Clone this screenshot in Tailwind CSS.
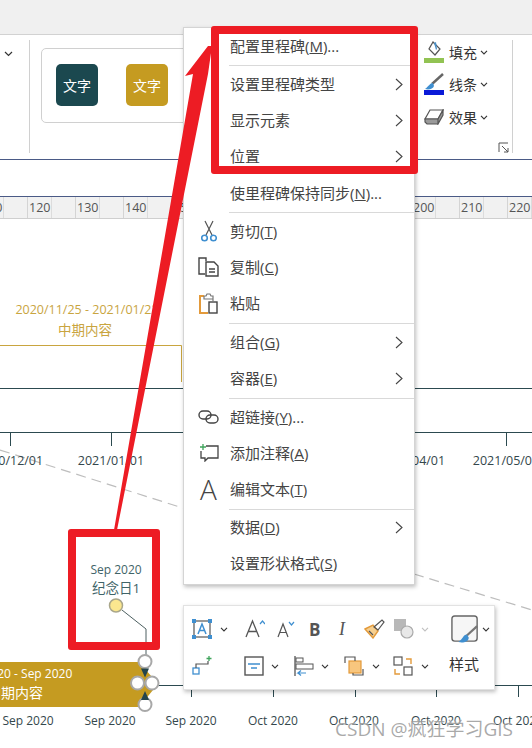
<!DOCTYPE html>
<html lang="zh">
<head>
    <meta charset="UTF-8">
    <title>里程碑右键菜单</title>
    <script src="https://cdn.jsdelivr.net/npm/@tailwindcss/browser@4"></script>
</head>
<body class="bg-white">
<div class="relative w-[532px] h-[748px] overflow-hidden bg-white text-[#444] font-['Open_Sans','Noto_Sans_CJK_SC',sans-serif]">

    <!-- Title strip -->
    <div class="h-[35px] bg-[#f0f0f0] border-b border-[#d2d2d2]"></div>

    <!-- Ribbon -->
    <div class="h-[125px] flex border-b border-[#4a5a86] pt-[5px]">
        <div class="w-[30px] h-[113px] border-r border-[#d0d0d0] pt-[11px] pl-[4px]">
            <svg width="9" height="6" viewBox="0 0 9 6" fill="none" stroke="#333" stroke-width="1.2"><path d="M1 1l3.5 3.5L8 1"/></svg>
        </div>
        <div class="ml-[11px] mt-[8px] w-[200px] h-[75px] border border-[#d0d0d0] rounded-[5px] flex pl-[14px] pt-[15px] gap-[28px]">
            <div class="w-[42px] h-[42px] rounded-[5px] bg-[#1b484f] text-white text-[14px] flex items-center justify-center">文字</div>
            <div class="w-[42px] h-[42px] rounded-[5px] bg-[#c59b21] text-white text-[14px] flex items-center justify-center">文字</div>
        </div>
        <div class="ml-[183px] w-[89px] h-[113px] relative border-r border-[#d0d0d0] flex flex-col text-[14px] text-[#333]">
            <div class="flex items-center h-[32px] -mt-[4px]">
                <svg width="20" height="24" viewBox="0 0 20 24" fill="none"><path d="M9 2l7 7-5 6-6-6z" stroke="#555" stroke-width="1.2" fill="#fff"/><path d="M10 3l2-1 1 7-1 1" fill="#4a90c8"/><rect y="18" width="20" height="5" fill="#92c353"/></svg>
                <span class="ml-[5px]">填充</span>
                <svg class="ml-[3px]" width="8" height="5" viewBox="0 0 8 5" fill="none" stroke="#333" stroke-width="1.1"><path d="M1 .8L4 4l3-3.2"/></svg>
            </div>
            <div class="flex items-center h-[33px]">
                <svg width="20" height="24" viewBox="0 0 20 24" fill="none"><path d="M19 1L8 11" stroke="#666" stroke-width="2.4"/><path d="M9 10c-3 0-4 3-8 6 4 1 8 0 9-3z" fill="#3f8fd0"/><rect y="17" width="20" height="5" fill="#0a1ad8"/></svg>
                <span class="ml-[5px]">线条</span>
                <svg class="ml-[3px]" width="8" height="5" viewBox="0 0 8 5" fill="none" stroke="#333" stroke-width="1.1"><path d="M1 .8L4 4l3-3.2"/></svg>
            </div>
            <div class="flex items-center h-[32px]">
                <svg width="20" height="16" viewBox="0 0 20 16" fill="#fff" stroke="#555" stroke-width="1.2"><path d="M6 1h13l-5 9H1z"/><path d="M1 10h13v5H3l-2-2zM14 10l5-9v5l-5 9z" fill="#9a9a9a"/></svg>
                <span class="ml-[5px]">效果</span>
                <svg class="ml-[3px]" width="8" height="5" viewBox="0 0 8 5" fill="none" stroke="#333" stroke-width="1.1"><path d="M1 .8L4 4l3-3.2"/></svg>
            </div>
            <svg class="absolute left-[74px] top-[102px]" width="11" height="11" viewBox="0 0 11 11" fill="none" stroke="#555"><path d="M1 10V1h9M4 4l6 6M10 6v4H6"/></svg>
        </div>
    </div>

    <div class="h-[36px]"></div>

    <!-- Ruler -->
    <div class="h-[23px] bg-[#f1f1f1] border-t border-b border-t-[#4a5a86] border-b-[#cfcfcf] flex ml-[-21px] text-[12.500px] text-[#555] leading-[21px]">
        <div class="w-[48px] shrink-0 border-l border-[#d4d4d4] pl-[1px] relative">110<div class="absolute left-[23px] top-0 h-full border-l border-[#dcdcdc]"></div></div>
        <div class="w-[48px] shrink-0 border-l border-[#d4d4d4] pl-[1px] relative">120<div class="absolute left-[23px] top-0 h-full border-l border-[#dcdcdc]"></div></div>
        <div class="w-[48px] shrink-0 border-l border-[#d4d4d4] pl-[1px] relative">130<div class="absolute left-[23px] top-0 h-full border-l border-[#dcdcdc]"></div></div>
        <div class="w-[48px] shrink-0 border-l border-[#d4d4d4] pl-[1px] relative">140<div class="absolute left-[23px] top-0 h-full border-l border-[#dcdcdc]"></div></div>
        <div class="w-[48px] shrink-0 border-l border-[#d4d4d4] pl-[1px] relative">150<div class="absolute left-[23px] top-0 h-full border-l border-[#dcdcdc]"></div></div>
        <div class="w-[48px] shrink-0 border-l border-[#d4d4d4] pl-[1px] relative">160<div class="absolute left-[23px] top-0 h-full border-l border-[#dcdcdc]"></div></div>
        <div class="w-[48px] shrink-0 border-l border-[#d4d4d4] pl-[1px] relative">170<div class="absolute left-[23px] top-0 h-full border-l border-[#dcdcdc]"></div></div>
        <div class="w-[48px] shrink-0 border-l border-[#d4d4d4] pl-[1px] relative">180<div class="absolute left-[23px] top-0 h-full border-l border-[#dcdcdc]"></div></div>
        <div class="w-[48px] shrink-0 border-l border-[#d4d4d4] pl-[1px] relative">190<div class="absolute left-[23px] top-0 h-full border-l border-[#dcdcdc]"></div></div>
        <div class="w-[48px] shrink-0 border-l border-[#d4d4d4] pl-[1px] relative">200<div class="absolute left-[23px] top-0 h-full border-l border-[#dcdcdc]"></div></div>
        <div class="w-[48px] shrink-0 border-l border-[#d4d4d4] pl-[1px] relative">210<div class="absolute left-[23px] top-0 h-full border-l border-[#dcdcdc]"></div></div>
        <div class="w-[48px] shrink-0 border-l border-[#d4d4d4] pl-[1px] relative">220<div class="absolute left-[23px] top-0 h-full border-l border-[#dcdcdc]"></div></div>
    </div>

    <!-- Timeline canvas -->
    <div class="relative h-[530px] -mt-[1px]">
        <svg class="absolute inset-0" width="532" height="530" viewBox="0 218 532 530" fill="none">
            <path d="M0 450L186 509M414 574L532 610" stroke="#bdbdbd" stroke-width="1.2" stroke-dasharray="10 6"/>
            <path d="M0 345.500H181.500V382" stroke="#c9a53f"/>
            <path d="M0 388.500H532M0 432.500H532" stroke="#2c4a50"/>
            <path d="M10.500 432V446M111.500 432V446M506.500 432V446" stroke="#2c4a50"/>
            <path d="M157 685.500H532" stroke="#2c4a50"/>
            <path d="M191.500 685V697M273.500 685V697M355.500 685V697M436.500 685V697M518.500 685V697" stroke="#2c4a50"/>
            <path d="M0 662H139L158 684L139 707H0z" fill="#c59b21"/>
            <path d="M122 610L146 629V660" stroke="#4c5f60"/>
            <circle cx="116" cy="605.500" r="6.500" fill="#fbe78f" stroke="#a9a68a" stroke-width="1.500"/>
            <g fill="#fff" stroke="#a8a8a8" stroke-width="2">
                <circle cx="145" cy="661.500" r="6.500"/>
                <circle cx="137.500" cy="683" r="6.500"/>
                <circle cx="152" cy="683" r="6.500"/>
                <circle cx="145" cy="704.500" r="6.500"/>
            </g>
            <path d="M141 668.500h8l-4 9zM141 700h8l-4-9z" fill="#24454c"/>
        </svg>
        <div class="absolute left-[87px] top-[82px] -translate-x-1/2 whitespace-nowrap text-[12.500px] leading-[20px] text-[#c9a53f]">2020/11/25 - 2021/01/22</div>
        <div class="absolute left-[85px] top-[102px] -translate-x-1/2 whitespace-nowrap text-[13.500px] leading-[20px] text-[#c9a53f]">中期内容</div>
        <div class="absolute left-[10px] top-[233px] -translate-x-1/2 whitespace-nowrap text-[12.500px] leading-[20px] text-[#34474c]">2020/12/01</div>
        <div class="absolute left-[111px] top-[233px] -translate-x-1/2 whitespace-nowrap text-[12.500px] leading-[20px] text-[#34474c]">2021/01/01</div>
        <div class="absolute left-[412px] top-[233px] -translate-x-1/2 whitespace-nowrap text-[12.500px] leading-[20px] text-[#34474c]">2021/04/01</div>
        <div class="absolute left-[506px] top-[233px] -translate-x-1/2 whitespace-nowrap text-[12.500px] leading-[20px] text-[#34474c]">2021/05/01</div>
        <div class="absolute left-[116px] top-[342px] -translate-x-1/2 whitespace-nowrap text-[12px] leading-[20px] text-[#3f6468]">Sep 2020</div>
        <div class="absolute left-[116px] top-[360px] -translate-x-1/2 whitespace-nowrap text-[13.500px] leading-[20px] text-[#3f6468]">纪念日1</div>
        <div class="absolute left-[16px] top-[446px] -translate-x-1/2 whitespace-nowrap text-[12px] leading-[20px] text-white">Sep 2020 - Sep 2020</div>
        <div class="absolute left-[15px] top-[465px] -translate-x-1/2 whitespace-nowrap text-[14px] leading-[20px] text-white">中期内容</div>
        <div class="absolute left-[28px] top-[493px] -translate-x-1/2 whitespace-nowrap text-[12px] leading-[20px] text-[#34474c]">Sep 2020</div>
        <div class="absolute left-[110px] top-[493px] -translate-x-1/2 whitespace-nowrap text-[12px] leading-[20px] text-[#34474c]">Sep 2020</div>
        <div class="absolute left-[191px] top-[493px] -translate-x-1/2 whitespace-nowrap text-[12px] leading-[20px] text-[#34474c]">Sep 2020</div>
        <div class="absolute left-[273px] top-[493px] -translate-x-1/2 whitespace-nowrap text-[12px] leading-[20px] text-[#34474c]">Oct 2020</div>
        <div class="absolute left-[354px] top-[493px] -translate-x-1/2 whitespace-nowrap text-[12px] leading-[20px] text-[#34474c]">Oct 2020</div>
        <div class="absolute left-[436px] top-[493px] -translate-x-1/2 whitespace-nowrap text-[12px] leading-[20px] text-[#34474c]">Oct 2020</div>
        <div class="absolute left-[518px] top-[493px] -translate-x-1/2 whitespace-nowrap text-[12px] leading-[20px] text-[#34474c]">Oct 2020</div>
    </div>

    <!-- Context menu -->
    <div class="absolute left-[183px] top-[27px] w-[232px] h-[558px] bg-white border border-[#d4d4d4] shadow-[1px_2px_4px_rgba(0,0,0,0.25)] text-[15px] text-[#444]">
        <div class="h-[37px] flex items-center pl-[46px]"><span>配置里程碑(<span class="underline">M</span>)...</span></div>
        <div class="ml-[45px] border-t border-[#d9d9d9]"></div>
        <div class="h-[37px] flex items-center justify-between pl-[46px] pr-[11px]"><span>设置里程碑类型</span><svg width="8" height="13" viewBox="0 0 8 13" fill="none" stroke="#444" stroke-width="1.100"><path d="M1 1l6 5.500L1 12"/></svg></div>
        <div class="h-[35px] flex items-center justify-between pl-[46px] pr-[11px]"><span>显示元素</span><svg width="8" height="13" viewBox="0 0 8 13" fill="none" stroke="#444" stroke-width="1.100"><path d="M1 1l6 5.500L1 12"/></svg></div>
        <div class="h-[36px] flex items-center justify-between pl-[46px] pr-[11px]"><span>位置</span><svg width="8" height="13" viewBox="0 0 8 13" fill="none" stroke="#444" stroke-width="1.100"><path d="M1 1l6 5.500L1 12"/></svg></div>
        <div class="h-[38px] flex items-center pl-[46px]"><span>使里程碑保持同步(<span class="underline">N</span>)...</span></div>
        <div class="ml-[45px] border-t border-[#d9d9d9]"></div>
        <div class="h-[36px] flex items-center">
            <div class="w-[46px] flex justify-center pl-[3px]"><svg width="16" height="22" viewBox="0 0 16 22" fill="none"><path d="M4 1l7 14M12 1L5 15" stroke="#555" stroke-width="1.200"/><circle cx="3.500" cy="18" r="2.800" stroke="#3f8fd0" stroke-width="1.600"/><circle cx="12.500" cy="18" r="2.800" stroke="#3f8fd0" stroke-width="1.600"/></svg></div>
            <span>剪切(<span class="underline">T</span>)</span>
        </div>
        <div class="h-[36px] flex items-center">
            <div class="w-[46px] flex justify-center pl-[3px]"><svg width="21" height="20" viewBox="0 0 21 20" fill="none" stroke="#444" stroke-width="1.400"><path d="M7 17H1V1h7v3"/><path d="M8 5h8l4 4v10H8z" fill="#fff"/><path d="M11 12h6M11 15h6"/></svg></div>
            <span>复制(<span class="underline">C</span>)</span>
        </div>
        <div class="h-[38px] flex items-center pb-[2px]">
            <div class="w-[46px] flex justify-center pl-[3px]"><svg width="20" height="21" viewBox="0 0 20 21" fill="none"><path d="M5 3H1v17h8" stroke="#e39a3b" stroke-width="2"/><path d="M5 3h2l1-2h3l1 2h2v5M5 3v3h9" stroke="#777" stroke-width="1.200"/><rect x="10" y="9" width="8" height="11" fill="#fff" stroke="#444" stroke-width="1.400"/></svg></div>
            <span>粘贴</span>
        </div>
        <div class="ml-[45px] border-t border-[#d9d9d9]"></div>
        <div class="h-[36px] flex items-center justify-between pl-[46px] pr-[11px]"><span>组合(<span class="underline">G</span>)</span><svg width="8" height="13" viewBox="0 0 8 13" fill="none" stroke="#444" stroke-width="1.100"><path d="M1 1l6 5.500L1 12"/></svg></div>
        <div class="h-[38px] flex items-center justify-between pl-[46px] pr-[11px] pb-[2px]"><span>容器(<span class="underline">E</span>)</span><svg width="8" height="13" viewBox="0 0 8 13" fill="none" stroke="#444" stroke-width="1.100"><path d="M1 1l6 5.500L1 12"/></svg></div>
        <div class="ml-[45px] border-t border-[#d9d9d9]"></div>
        <div class="h-[36px] flex items-center">
            <div class="w-[46px] flex justify-center pl-[3px]"><svg width="21" height="14" viewBox="0 0 21 14" fill="none" stroke="#444" stroke-width="1.400"><rect x="1" y="1" width="12" height="8" rx="4"/><rect x="8" y="5" width="12" height="8" rx="4"/></svg></div>
            <span>超链接(<span class="underline">Y</span>)...</span>
        </div>
        <div class="h-[36px] flex items-center">
            <div class="w-[46px] flex justify-center pl-[3px]"><svg width="20" height="18" viewBox="0 0 20 18" fill="none"><path d="M7 2h12v12H9l-3 3v-3H2V7" stroke="#444" stroke-width="1.300"/><path d="M4 0v6M1 3h6" stroke="#3fa45b" stroke-width="1.300"/></svg></div>
            <span>添加注释(<span class="underline">A</span>)</span>
        </div>
        <div class="h-[38px] flex items-center pb-[2px]">
            <div class="w-[46px] flex justify-center pl-[3px] text-[28px] leading-none text-[#444] font-light">A</div>
            <span>编辑文本(<span class="underline">T</span>)</span>
        </div>
        <div class="ml-[45px] border-t border-[#d9d9d9]"></div>
        <div class="h-[35px] flex items-center justify-between pl-[46px] pr-[11px]"><span>数据(<span class="underline">D</span>)</span><svg width="8" height="13" viewBox="0 0 8 13" fill="none" stroke="#444" stroke-width="1.100"><path d="M1 1l6 5.500L1 12"/></svg></div>
        <div class="h-[37px] flex items-center pl-[46px]"><span>设置形状格式(<span class="underline">S</span>)</span></div>
    </div>

    <!-- Mini toolbar -->
    <div class="absolute left-[183px] top-[605px] w-[312px] h-[85px] bg-white border border-[#e2e2e2] shadow-[1px_2px_4px_rgba(0,0,0,0.25)] flex pl-[8px] text-[#444]">
        <div class="flex flex-col">
            <div class="h-[46px] flex items-center">
                <svg width="20" height="20" viewBox="0 0 20 20" fill="none"><rect x="2" y="2" width="16" height="16" stroke="#555" stroke-width="1.200"/><g fill="#3f8fd0"><rect width="4" height="4"/><rect x="16" width="4" height="4"/><rect y="16" width="4" height="4"/><rect x="16" y="16" width="4" height="4"/></g><path d="M6 15l4-10 4 10M7.500 11.500h5" stroke="#3f8fd0" stroke-width="1.500"/></svg>
                <svg class="ml-[8px]" width="8" height="5" viewBox="0 0 8 5" fill="none" stroke="#333" stroke-width="1.100"><path d="M1 .8L4 4l3-3.200"/></svg>
                <svg class="ml-[17px]" width="20" height="20" viewBox="0 0 20 20" fill="none"><path d="M1 18L7.500 2 14 18M3.500 12.500h8" stroke="#555" stroke-width="1.300"/><path d="M15 5l2.500-3L20 5" stroke="#3f8fd0" stroke-width="1.200"/></svg>
                <svg class="ml-[12px]" width="18" height="17" viewBox="0 0 18 17" fill="none"><path d="M1 16L6 3l5 13M3 11.500h6" stroke="#555" stroke-width="1.200"/><path d="M12 1l2.500 3L17 1" stroke="#3f8fd0" stroke-width="1.200"/></svg>
                <span class="ml-[14px] w-[11px] text-[17px] font-bold leading-none text-[#555]">B</span>
                <span class="ml-[19px] w-[9px] text-[18px] italic leading-none font-['Liberation_Serif',serif] text-[#555]">I</span>
                <svg class="ml-[16px]" width="21" height="20" viewBox="0 0 21 20" fill="none"><path d="M1 10l8-4 5 6-5 7z" fill="#f6cf8f" stroke="#e39a3b" stroke-width="1.400"/><path d="M5 12l4 4M10 8l8-7 2 2-6 8z" stroke="#555" stroke-width="1.200"/></svg>
                <svg class="ml-[9px]" width="20" height="20" viewBox="0 0 20 20" fill="none"><rect x="0" y="0" width="12" height="12" fill="#b8b8b8"/><circle cx="13" cy="13" r="6" fill="#e8e8e8" stroke="#aaa" stroke-width="1.200"/></svg>
                <svg class="ml-[7px]" width="8" height="5" viewBox="0 0 8 5" fill="none" stroke="#c0c0c0" stroke-width="1.100"><path d="M1 .8L4 4l3-3.200"/></svg>
            </div>
            <div class="h-[28px] flex items-center">
                <svg width="20" height="20" viewBox="0 0 20 20" fill="none"><rect x="1" y="12" width="6" height="6" stroke="#3f8fd0" stroke-width="1.300"/><path d="M4 12V8h12V5" stroke="#555" stroke-width="1.200"/><path d="M17 0v5M14.500 2.500h5" stroke="#3fa45b" stroke-width="1.300"/></svg>
                <svg class="ml-[32px]" width="20" height="20" viewBox="0 0 20 20" fill="none"><rect x="1" y="1" width="18" height="18" stroke="#555" stroke-width="1.400"/><path d="M4 8h12M7 12h6" stroke="#3f8fd0" stroke-width="1.500"/></svg>
                <svg class="ml-[7px]" width="8" height="5" viewBox="0 0 8 5" fill="none" stroke="#333" stroke-width="1.100"><path d="M1 .8L4 4l3-3.200"/></svg>
                <svg class="ml-[15px]" width="20" height="20" viewBox="0 0 20 20" fill="none"><path d="M1 0v20" stroke="#555" stroke-width="1.300"/><rect x="2" y="2" width="7" height="4" stroke="#555"/><rect x="2" y="8" width="17" height="5" stroke="#555"/><path d="M12 17H4l3-2.500M4 17l3 2.500" stroke="#3f8fd0" stroke-width="1.200"/></svg>
                <svg class="ml-[7px]" width="8" height="5" viewBox="0 0 8 5" fill="none" stroke="#333" stroke-width="1.100"><path d="M1 .8L4 4l3-3.200"/></svg>
                <svg class="ml-[15px]" width="20" height="20" viewBox="0 0 20 20" fill="none"><rect x="5" y="5" width="12" height="12" fill="#f8c67e" stroke="#e39a3b" stroke-width="1.200"/><path d="M1 7V1h10v4M19 13v6H9v-2" stroke="#555" stroke-width="1.200"/></svg>
                <svg class="ml-[8px]" width="8" height="5" viewBox="0 0 8 5" fill="none" stroke="#333" stroke-width="1.100"><path d="M1 .8L4 4l3-3.200"/></svg>
                <svg class="ml-[13px]" width="20" height="20" viewBox="0 0 20 20" fill="none"><rect x="1" y="1" width="8" height="8" stroke="#555" stroke-width="1.200"/><rect x="11" y="11" width="8" height="8" stroke="#555" stroke-width="1.200"/><path d="M13 3h5v5M2 13v5h5" stroke="#e39a3b" stroke-width="1.400"/></svg>
                <svg class="ml-[8px]" width="8" height="5" viewBox="0 0 8 5" fill="none" stroke="#333" stroke-width="1.100"><path d="M1 .8L4 4l3-3.200"/></svg>
            </div>
        </div>
        <div class="ml-[22px] flex flex-col">
            <div class="h-[46px] flex items-center">
                <svg width="28" height="28" viewBox="0 0 30 30" fill="none"><rect x="1" y="1" width="27" height="27" rx="3" fill="#f6f6f6" stroke="#666" stroke-width="1.500"/><path d="M28 12L17 22" stroke="#777" stroke-width="2.400"/><path d="M17 21c-4 0-4 5-9 8 5 1 11 0 11-5z" fill="#3f8fd0"/></svg>
                <svg class="ml-[3px]" width="8" height="5" viewBox="0 0 8 5" fill="none" stroke="#333" stroke-width="1.100"><path d="M1 .8L4 4l3-3.200"/></svg>
            </div>
            <div class="h-[24px] flex items-center text-[15px] text-[#333] -ml-[2px]">样式</div>
        </div>
    </div>

    <!-- Red annotations -->
    <div class="absolute left-[211px] top-[26px] w-[207px] h-[148px] border-[8px] border-[#ed1c24] rounded-[3px]"></div>
    <div class="absolute left-[68px] top-[529px] w-[92px] h-[121px] border-[8px] border-[#ed1c24] rounded-[3px]"></div>
    <svg class="absolute inset-0 pointer-events-none" width="532" height="748" viewBox="0 0 532 748"><path d="M114 530L117 530L208 74L212 46L208 46L185 76L193 74z" fill="#ed1c24"/></svg>

    <!-- Watermark -->
    <div class="absolute left-[335px] top-[717px] whitespace-nowrap text-[19px] leading-[24px] text-[#8d8d8d]/75 [text-shadow:0_0_2px_#fff]">CSDN @疯狂学习GIS</div>
</div>
</body>
</html>
